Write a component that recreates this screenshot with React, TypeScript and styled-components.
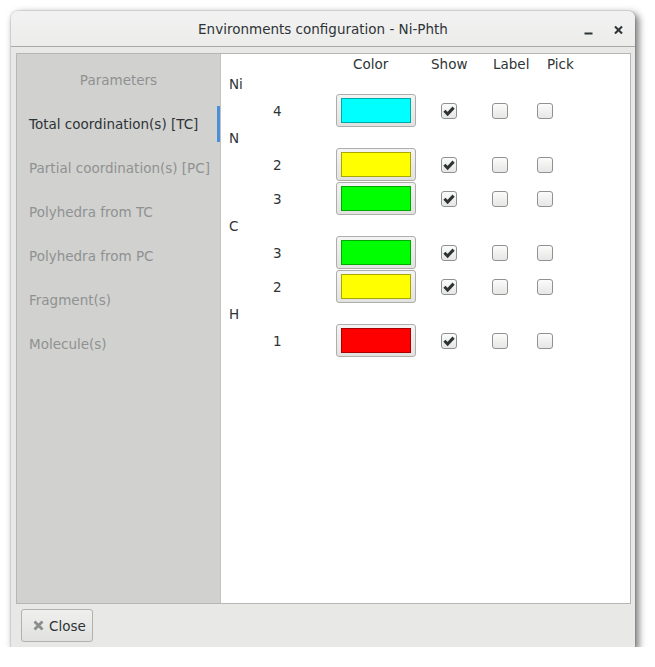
import React, { useState } from 'react';
import styled, { createGlobalStyle } from 'styled-components';

const GlobalStyle = createGlobalStyle`
  html, body {
    margin: 0;
    padding: 0;
    background: #ffffff;
  }
  body {
    font-family: 'DejaVu Sans', 'Liberation Sans', sans-serif;
    font-size: 13.5px;
    color: #2e3436;
  }
`;

const SECTIONS = [
  'Total coordination(s) [TC]',
  'Partial coordination(s) [PC]',
  'Polyhedra from TC',
  'Polyhedra from PC',
  'Fragment(s)',
  'Molecule(s)',
];

const ELEMENTS = [
  { name: 'Ni', envs: [{ n: 4, color: '#00ffff', edge: '#00a8a8' }] },
  {
    name: 'N',
    envs: [
      { n: 2, color: '#ffff00', edge: '#a8a800' },
      { n: 3, color: '#00ff00', edge: '#00a800' },
    ],
  },
  {
    name: 'C',
    envs: [
      { n: 3, color: '#00ff00', edge: '#00a800' },
      { n: 2, color: '#ffff00', edge: '#a8a800' },
    ],
  },
  { name: 'H', envs: [{ n: 1, color: '#ff0000', edge: '#a80000' }] },
];

export default function App() {
  const [active, setActive] = useState(0);
  const [shown, setShown] = useState<Record<string, boolean>>({});

  const toggle = (key: string) => setShown((s) => ({ ...s, [key]: !(s[key] ?? key.endsWith('show')) }));
  const isOn = (key: string) => shown[key] ?? key.endsWith('show');

  const sidebarMarkup = SECTIONS.map((title, idx) => (
    <SideItem key={title} onClick={() => setActive(idx)}>
      <SideLabel isActive={idx === active}>{title}</SideLabel>
      <Indicator isActive={idx === active} />
    </SideItem>
  ));

  const rowsMarkup = ELEMENTS.map((el) => (
    <React.Fragment key={el.name}>
      <ElementName>{el.name}</ElementName>
      {el.envs.map((env, i) => {
        const base = `${el.name}-${i}`;
        return (
          <React.Fragment key={base}>
            <EnvNumber>{env.n}</EnvNumber>
            <ColorCell>
              <ColorButton>
                <Swatch style={{ background: env.color, borderColor: env.edge }} />
              </ColorButton>
            </ColorCell>
            <CheckCell offset={25}>
              <Check checked={isOn(base + '-show')} onClick={() => toggle(base + '-show')} />
            </CheckCell>
            <CheckCell offset={12}>
              <Check checked={isOn(base + '-label')} onClick={() => toggle(base + '-label')} />
            </CheckCell>
            <CheckCell offset={7}>
              <Check checked={isOn(base + '-pick')} onClick={() => toggle(base + '-pick')} />
            </CheckCell>
          </React.Fragment>
        );
      })}
    </React.Fragment>
  ));

  return (
    <>
      <GlobalStyle />
      <Window>
        <TitleBar>
          <TitleSpacer />
          <Title>Environments configuration - Ni-Phth</Title>
          <TitleButtons>
            <TitleButton aria-label="minimize">
              <svg width="9" height="10" viewBox="0 0 9 10">
                <rect x="0.5" y="7.5" width="8" height="2" fill="#2e3436" />
              </svg>
            </TitleButton>
            <TitleButton aria-label="close">
              <svg width="9" height="10" viewBox="0 0 9 10">
                <path d="M1 1.5 L8 8.5 M8 1.5 L1 8.5" stroke="#2e3436" strokeWidth="2.1" fill="none" />
              </svg>
            </TitleButton>
          </TitleButtons>
        </TitleBar>
        <Body>
          <Frame>
            <Sidebar>
              <SideHeader>Parameters</SideHeader>
              {sidebarMarkup}
            </Sidebar>
            <Panel>
              <Table>
                <span />
                <HeadCell offset={17}>Color</HeadCell>
                <HeadCell offset={15}>Show</HeadCell>
                <HeadCell offset={13}>Label</HeadCell>
                <HeadCell offset={17}>Pick</HeadCell>
                {rowsMarkup}
              </Table>
            </Panel>
          </Frame>
          <Footer>
            <CloseButton>
              <svg width="11" height="11" viewBox="0 0 11 11">
                <path d="M1.5 1.5 L9.5 9.5 M9.5 1.5 L1.5 9.5" stroke="#8a8d8e" strokeWidth="2.8" fill="none" />
              </svg>
              Close
            </CloseButton>
          </Footer>
        </Body>
      </Window>
    </>
  );
}

const Window = styled.div`
  margin: 11px 0 0 11px;
  width: 624px;
  height: 636px;
  display: flex;
  flex-direction: column;
  background: #e8e8e7;
  border-radius: 7px 7px 0 0;
  box-shadow: 3px 3px 7px 1px rgba(0, 0, 0, 0.5), 0 0 0 1px rgba(0, 0, 0, 0.08);
`;

const TitleBar = styled.div`
  height: 35px;
  flex: none;
  display: flex;
  align-items: center;
  background: linear-gradient(#f2f2f2, #ececeb);
  border-bottom: 1px solid #a9a9a6;
  border-radius: 7px 7px 0 0;
`;

const TitleSpacer = styled.div`
  width: 60px;
`;

const Title = styled.div`
  flex: 1;
  text-align: center;
  color: #2e3436;
`;

const TitleButtons = styled.div`
  width: 60px;
  box-sizing: border-box;
  padding: 2px 12px 0 9px;
  display: flex;
  justify-content: space-between;
  align-items: center;
`;

const TitleButton = styled.div`
  width: 9px;
  height: 10px;
  display: flex;
`;

const Body = styled.div`
  flex: 1;
  display: flex;
  flex-direction: column;
  padding: 6px 4px 0 5px;
  min-height: 0;
`;

const Frame = styled.div`
  height: 549px;
  display: flex;
  border: 1px solid #b6b6b3;
  background: #ffffff;
`;

const Sidebar = styled.div`
  width: 203px;
  flex: none;
  background: #d1d1cf;
  border-right: 1px solid #c2c2bf;
  display: flex;
  flex-direction: column;
`;

const SideHeader = styled.div`
  height: 48px;
  display: flex;
  align-items: center;
  justify-content: center;
  padding-top: 3px;
  box-sizing: border-box;
  color: #8f9192;
`;

const SideItem = styled.div`
  height: 44px;
  display: flex;
  align-items: center;
  cursor: pointer;
`;

const SideLabel = styled.div<{ isActive: boolean }>`
  flex: 1;
  padding-left: 12px;
  white-space: nowrap;
  color: ${(p) => (p.isActive ? '#2e3436' : '#8f9192')};
`;

const Indicator = styled.div<{ isActive: boolean }>`
  width: 3px;
  height: 36px;
  background: ${(p) => (p.isActive ? '#4a90d9' : 'transparent')};
`;

const Panel = styled.div`
  flex: 1;
  padding-left: 8px;
`;

const Table = styled.div`
  display: grid;
  grid-template-columns: 107px 80px 64px 50px 60px;
  grid-auto-rows: auto;
  align-items: center;
`;

const HeadCell = styled.div<{ offset: number }>`
  height: 20px;
  display: flex;
  align-items: center;
  padding-left: ${(p) => p.offset}px;
`;

const ElementName = styled.div`
  grid-column: 1 / -1;
  height: 20px;
  display: flex;
  align-items: center;
`;

const EnvNumber = styled.div`
  height: 34px;
  display: flex;
  align-items: center;
  padding-left: 44px;
`;

const ColorCell = styled.div`
  height: 34px;
  display: flex;
`;

const ColorButton = styled.div`
  width: 80px;
  height: 33px;
  box-sizing: border-box;
  border: 1px solid #adadaa;
  border-radius: 3px;
  background: linear-gradient(#f4f4f4, #e2e2e1);
  box-shadow: 0 1px 0 rgba(255, 255, 255, 0.8);
  display: flex;
  align-items: center;
  justify-content: center;
`;

const Swatch = styled.div`
  width: 70px;
  height: 25px;
  box-sizing: border-box;
  border: 1px solid;
`;

const CheckCell = styled.div<{ offset: number }>`
  height: 34px;
  display: flex;
  align-items: center;
  padding-left: ${(p) => p.offset}px;
`;

function Check({ checked, onClick }: { checked: boolean; onClick: () => void }) {
  return (
    <CheckBox onClick={onClick}>
      {checked && (
        <svg width="14" height="14" viewBox="0 0 14 14">
          <path d="M2.4 6.8 L5.6 10 L11.6 3.6" stroke="#2e3436" strokeWidth="3" fill="none" />
        </svg>
      )}
    </CheckBox>
  );
}

const CheckBox = styled.div`
  width: 16px;
  height: 16px;
  box-sizing: border-box;
  border: 1px solid #8f9192;
  border-radius: 3px;
  background: linear-gradient(#fbfbfb, #e6e6e5);
  display: flex;
  align-items: center;
  justify-content: center;
  cursor: pointer;
`;

const Footer = styled.div`
  display: flex;
  padding: 5px 0 5px 5px;
`;

const CloseButton = styled.div`
  width: 72px;
  height: 33px;
  box-sizing: border-box;
  border: 1px solid #b1b1ae;
  border-radius: 3px;
  background: linear-gradient(#efefee, #e1e1df);
  display: flex;
  align-items: center;
  gap: 5px;
  padding-left: 11px;
  color: #2e3436;
  cursor: pointer;
`;
